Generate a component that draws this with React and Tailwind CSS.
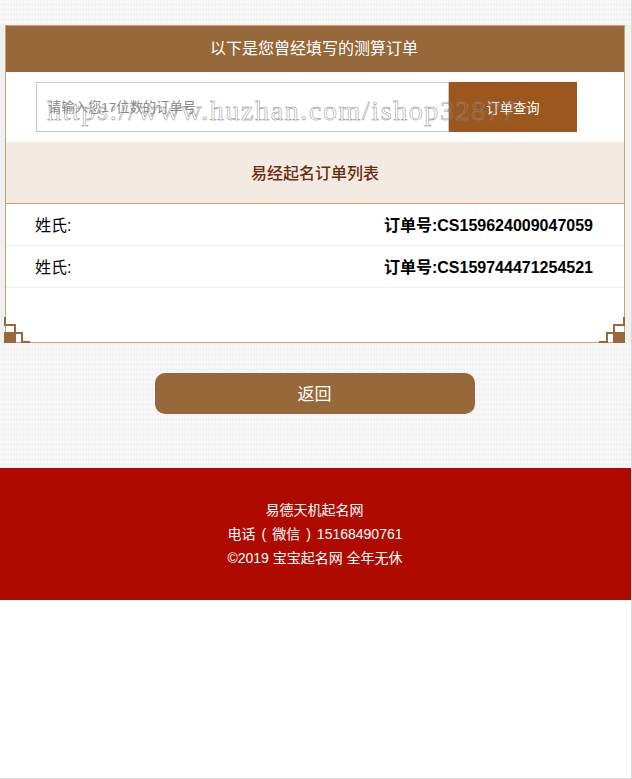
const orders = ['CS159624009047059', 'CS159744471254521'];

function Corner({ flip }) {
  return (
    <svg
      viewBox="0 0 26 26"
      fill="#96683a"
      className={`absolute bottom-0 w-[26px] h-[26px] ${flip ? 'right-[-1px] -scale-x-100' : 'left-[-2px]'}`}
    >
      <rect x="0" y="0" width="2" height="8" />
      <rect x="0" y="7" width="12" height="2" />
      <rect x="10" y="7" width="2" height="8" />
      <rect x="0" y="15" width="12" height="11" />
      <rect x="12" y="15" width="6" height="2" />
      <rect x="17" y="15" width="2" height="11" />
      <rect x="18" y="24" width="8" height="2" />
    </svg>
  );
}

export default function App() {
  return (
    <div className="relative w-[632px] h-[779px] bg-white border-r border-b border-[#d8d8d8] overflow-hidden text-black font-['Liberation_Sans','Noto_Sans_CJK_SC',sans-serif]">
      {/* Textured part of the page */}
      <div className="h-[468px] pt-[25px] bg-[#f3f3f3] bg-[repeating-linear-gradient(90deg,rgba(255,255,255,0.35)_0px,rgba(255,255,255,0.35)_1px,rgba(232,232,232,0.25)_2px,rgba(255,255,255,0.1)_3px),repeating-linear-gradient(0deg,rgba(255,255,255,0.3)_0px,rgba(255,255,255,0.3)_2px,rgba(232,232,232,0.25)_3px,rgba(255,255,255,0.1)_5px)]">
        <div className="bg-[#eff1f0] pl-[5px] pr-[6px]">
          <div className="relative h-[318px] bg-white border-t border-x border-[#c9a36b] border-b-0">
            <div className="h-[46px] pr-[2px] bg-[#96683a] flex items-center justify-center text-white text-base">
              以下是您曾经填写的测算订单
            </div>

            <div className="h-[70px] pt-[10px] pl-[30px] flex items-start">
              <div className="w-[413px] h-[50px] pt-[2px] border border-[#c8c8c8] flex items-center pl-[11px] text-[13.33px] text-[#8a8a8a]">
                请输入您17位数的订单号
              </div>
              <div className="w-[128px] h-[50px] pt-[3px] bg-[#9c571e] flex items-center justify-center text-[13.33px] text-white">
                订单查询
              </div>
            </div>

            <div className="h-[62px] pt-[2px] bg-[#f3ebe1] border-b border-[#c9a36b] flex items-center justify-center text-base font-medium text-[#6b2d12]">
              易经起名订单列表
            </div>

            {orders.map((no) => (
              <div key={no} className="h-[42px] pt-[2px] border-b border-[#eeeeee] pl-[29px] pr-[31px] flex items-center justify-between text-base">
                <span>姓氏:</span>
                <span className="font-bold">订单号:{no}</span>
              </div>
            ))}

            <div className="absolute left-0 right-0 bottom-0 h-px bg-[#c9a36b]" />
            <Corner />
            <Corner flip />
          </div>
        </div>

        <div className="mt-[30px] ml-[155px] w-[320px] h-[41px] pt-[2px] pr-[1px] rounded-[10px] bg-[#96683a] flex items-center justify-center text-white text-[17px]">
          返回
        </div>
      </div>

      <footer className="w-[631px] h-[132px] pt-[30px] bg-[#ae0a00] text-white text-sm leading-[24px] text-center">
        <p className="pr-[2px]">易德天机起名网</p>
        <p className="pr-[1px]">
          电话<span className="mx-[6px]">(</span>微信<span className="mx-[6px]">)</span>15168490761
        </p>
        <p className="pr-[1px]">©2019 宝宝起名网 全年无休</p>
      </footer>

      {/* Watermark lying over the search bar */}
      <div className="absolute left-[47px] top-[92px] text-[28px] leading-[38px] tracking-[1.6px] whitespace-nowrap pointer-events-none text-transparent [-webkit-text-stroke:0.5px_#8c8c8c] font-['Liberation_Serif',serif]">
        https://www.huzhan.com/ishop32877
      </div>
    </div>
  );
}
